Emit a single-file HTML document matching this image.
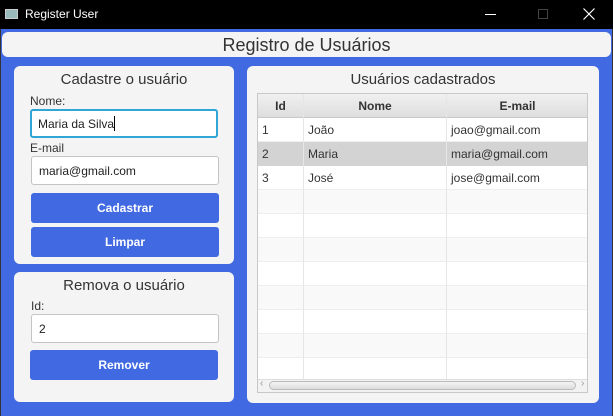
<!DOCTYPE html>
<html><head><meta charset="utf-8"><style>
*{box-sizing:border-box;margin:0;padding:0}
body{width:613px;height:416px;background:#4169e1;font-family:"Liberation Sans",sans-serif;position:relative;overflow:hidden;color:#333}
.a{position:absolute}
.tb{left:0;top:0;width:613px;height:29px;background:#000;color:#fff;font-size:12px}
.panel{background:#f4f4f4;border-radius:6px}
.t{text-align:center;font-size:15px;color:#333}
.lbl{font-size:12px;color:#333}
.in{background:#fff;border:1px solid #c4c4c4;border-radius:3px;font-size:12px;padding-left:7px;display:flex;align-items:center;color:#222}
.btn{background:#4169e1;color:#fff;font-weight:bold;font-size:12px;border-radius:3px;display:flex;align-items:center;justify-content:center}
.cell{position:absolute;font-size:12px;display:flex;align-items:center;padding-left:4px;height:24px}
</style></head><body>
<div class="a" style="left:0;top:0;width:1px;height:416px;background:#333"></div>
<div class="a" style="right:0;top:0;width:1px;height:416px;background:#333"></div>
<div class="a tb">
 <div class="a" style="left:5px;top:9px;width:13px;height:10px;background:#9bb;border:1px solid #ccc"></div>
 <div class="a" style="left:25px;top:7px">Register User</div>
 <div class="a" style="left:485px;top:14px;width:11px;height:1px;background:#fff"></div>
 <div class="a" style="left:538px;top:9px;width:10px;height:10px;border:1px solid #444"></div>
 <svg class="a" style="left:583px;top:8px" width="12" height="12" viewBox="0 0 12 12"><path d="M0.5 0.5L11.5 11.5M11.5 0.5L0.5 11.5" stroke="#fff" stroke-width="1.2"/></svg>
</div>
<div class="a panel" style="left:2px;top:32px;width:609px;height:25px;border-radius:6px"><div class="t" style="font-size:18px;line-height:27px">Registro de Usuários</div></div>

<div class="a panel" style="left:14px;top:66px;width:220px;height:198px">
 <div class="t" style="margin-top:5px">Cadastre o usuário</div>
</div>
<div class="a lbl" style="left:30px;top:94px">Nome:</div>
<div class="a in" style="left:30px;top:109px;width:188px;height:29px;border:2px solid #2ea6d6;padding-left:6px">Maria da Silva<span style="width:1px;height:15px;background:#000"></span></div>
<div class="a lbl" style="left:30px;top:141px">E-mail</div>
<div class="a in" style="left:31px;top:156px;width:188px;height:29px">maria@gmail.com</div>
<div class="a btn" style="left:31px;top:193px;width:188px;height:30px">Cadastrar</div>
<div class="a btn" style="left:31px;top:227px;width:188px;height:30px">Limpar</div>

<div class="a panel" style="left:14px;top:272px;width:220px;height:130px">
 <div class="t" style="margin-top:5px">Remova o usuário</div>
</div>
<div class="a lbl" style="left:31px;top:299px">Id:</div>
<div class="a in" style="left:31px;top:314px;width:188px;height:29px">2</div>
<div class="a btn" style="left:30px;top:350px;width:188px;height:30px">Remover</div>

<div class="a panel" style="left:247px;top:66px;width:352px;height:337px">
 <div class="t" style="margin-top:5px">Usuários cadastrados</div>
</div>
<div class="a" style="left:257px;top:93px;width:331px;height:300px;border:1px solid #c8c8c8;background:#fff;overflow:hidden">
 <div class="a" style="left:0;top:0;width:331px;height:24px;background:linear-gradient(#f0f0f0,#dedede);border-bottom:1px solid #c8c8c8"></div>
 <div class="a" style="left:0;top:24px;width:331px;height:264px;background:repeating-linear-gradient(#fff 0 23px,#eee 23px 24px,#f9f9f9 24px 47px,#eee 47px 48px)"></div>
 <div class="a" style="left:0;top:48px;width:331px;height:24px;background:#d3d3d3"></div>
 <div class="a" style="left:45px;top:0;width:1px;height:288px;background:#e6e6e6"></div>
 <div class="a" style="left:188px;top:0;width:1px;height:288px;background:#e6e6e6"></div>
 <div class="cell" style="left:0;top:0;width:45px;justify-content:center;padding:0;font-weight:bold">Id</div>
 <div class="cell" style="left:46px;top:0;width:142px;justify-content:center;padding:0;font-weight:bold">Nome</div>
 <div class="cell" style="left:189px;top:0;width:141px;justify-content:center;padding:0;font-weight:bold">E-mail</div>
 <div class="cell" style="left:0;top:24px">1</div><div class="cell" style="left:46px;top:24px">João</div><div class="cell" style="left:189px;top:24px">joao@gmail.com</div>
 <div class="cell" style="left:0;top:48px">2</div><div class="cell" style="left:46px;top:48px">Maria</div><div class="cell" style="left:189px;top:48px">maria@gmail.com</div>
 <div class="cell" style="left:0;top:72px">3</div><div class="cell" style="left:46px;top:72px">José</div><div class="cell" style="left:189px;top:72px">jose@gmail.com</div>
 <div class="a" style="left:0;top:285px;width:331px;height:14px;background:#f2f2f2;border-top:1px solid #ddd"></div>
 <div class="a" style="left:11px;top:287px;width:307px;height:9px;border:1px solid #bbb;border-radius:5px;background:linear-gradient(#f4f4f4,#ddd)"></div>
 <div class="a" style="left:2px;top:284px;font-size:10px;color:#999">‹</div>
 <div class="a" style="left:323px;top:284px;font-size:10px;color:#999">›</div>
</div>
</body></html>
